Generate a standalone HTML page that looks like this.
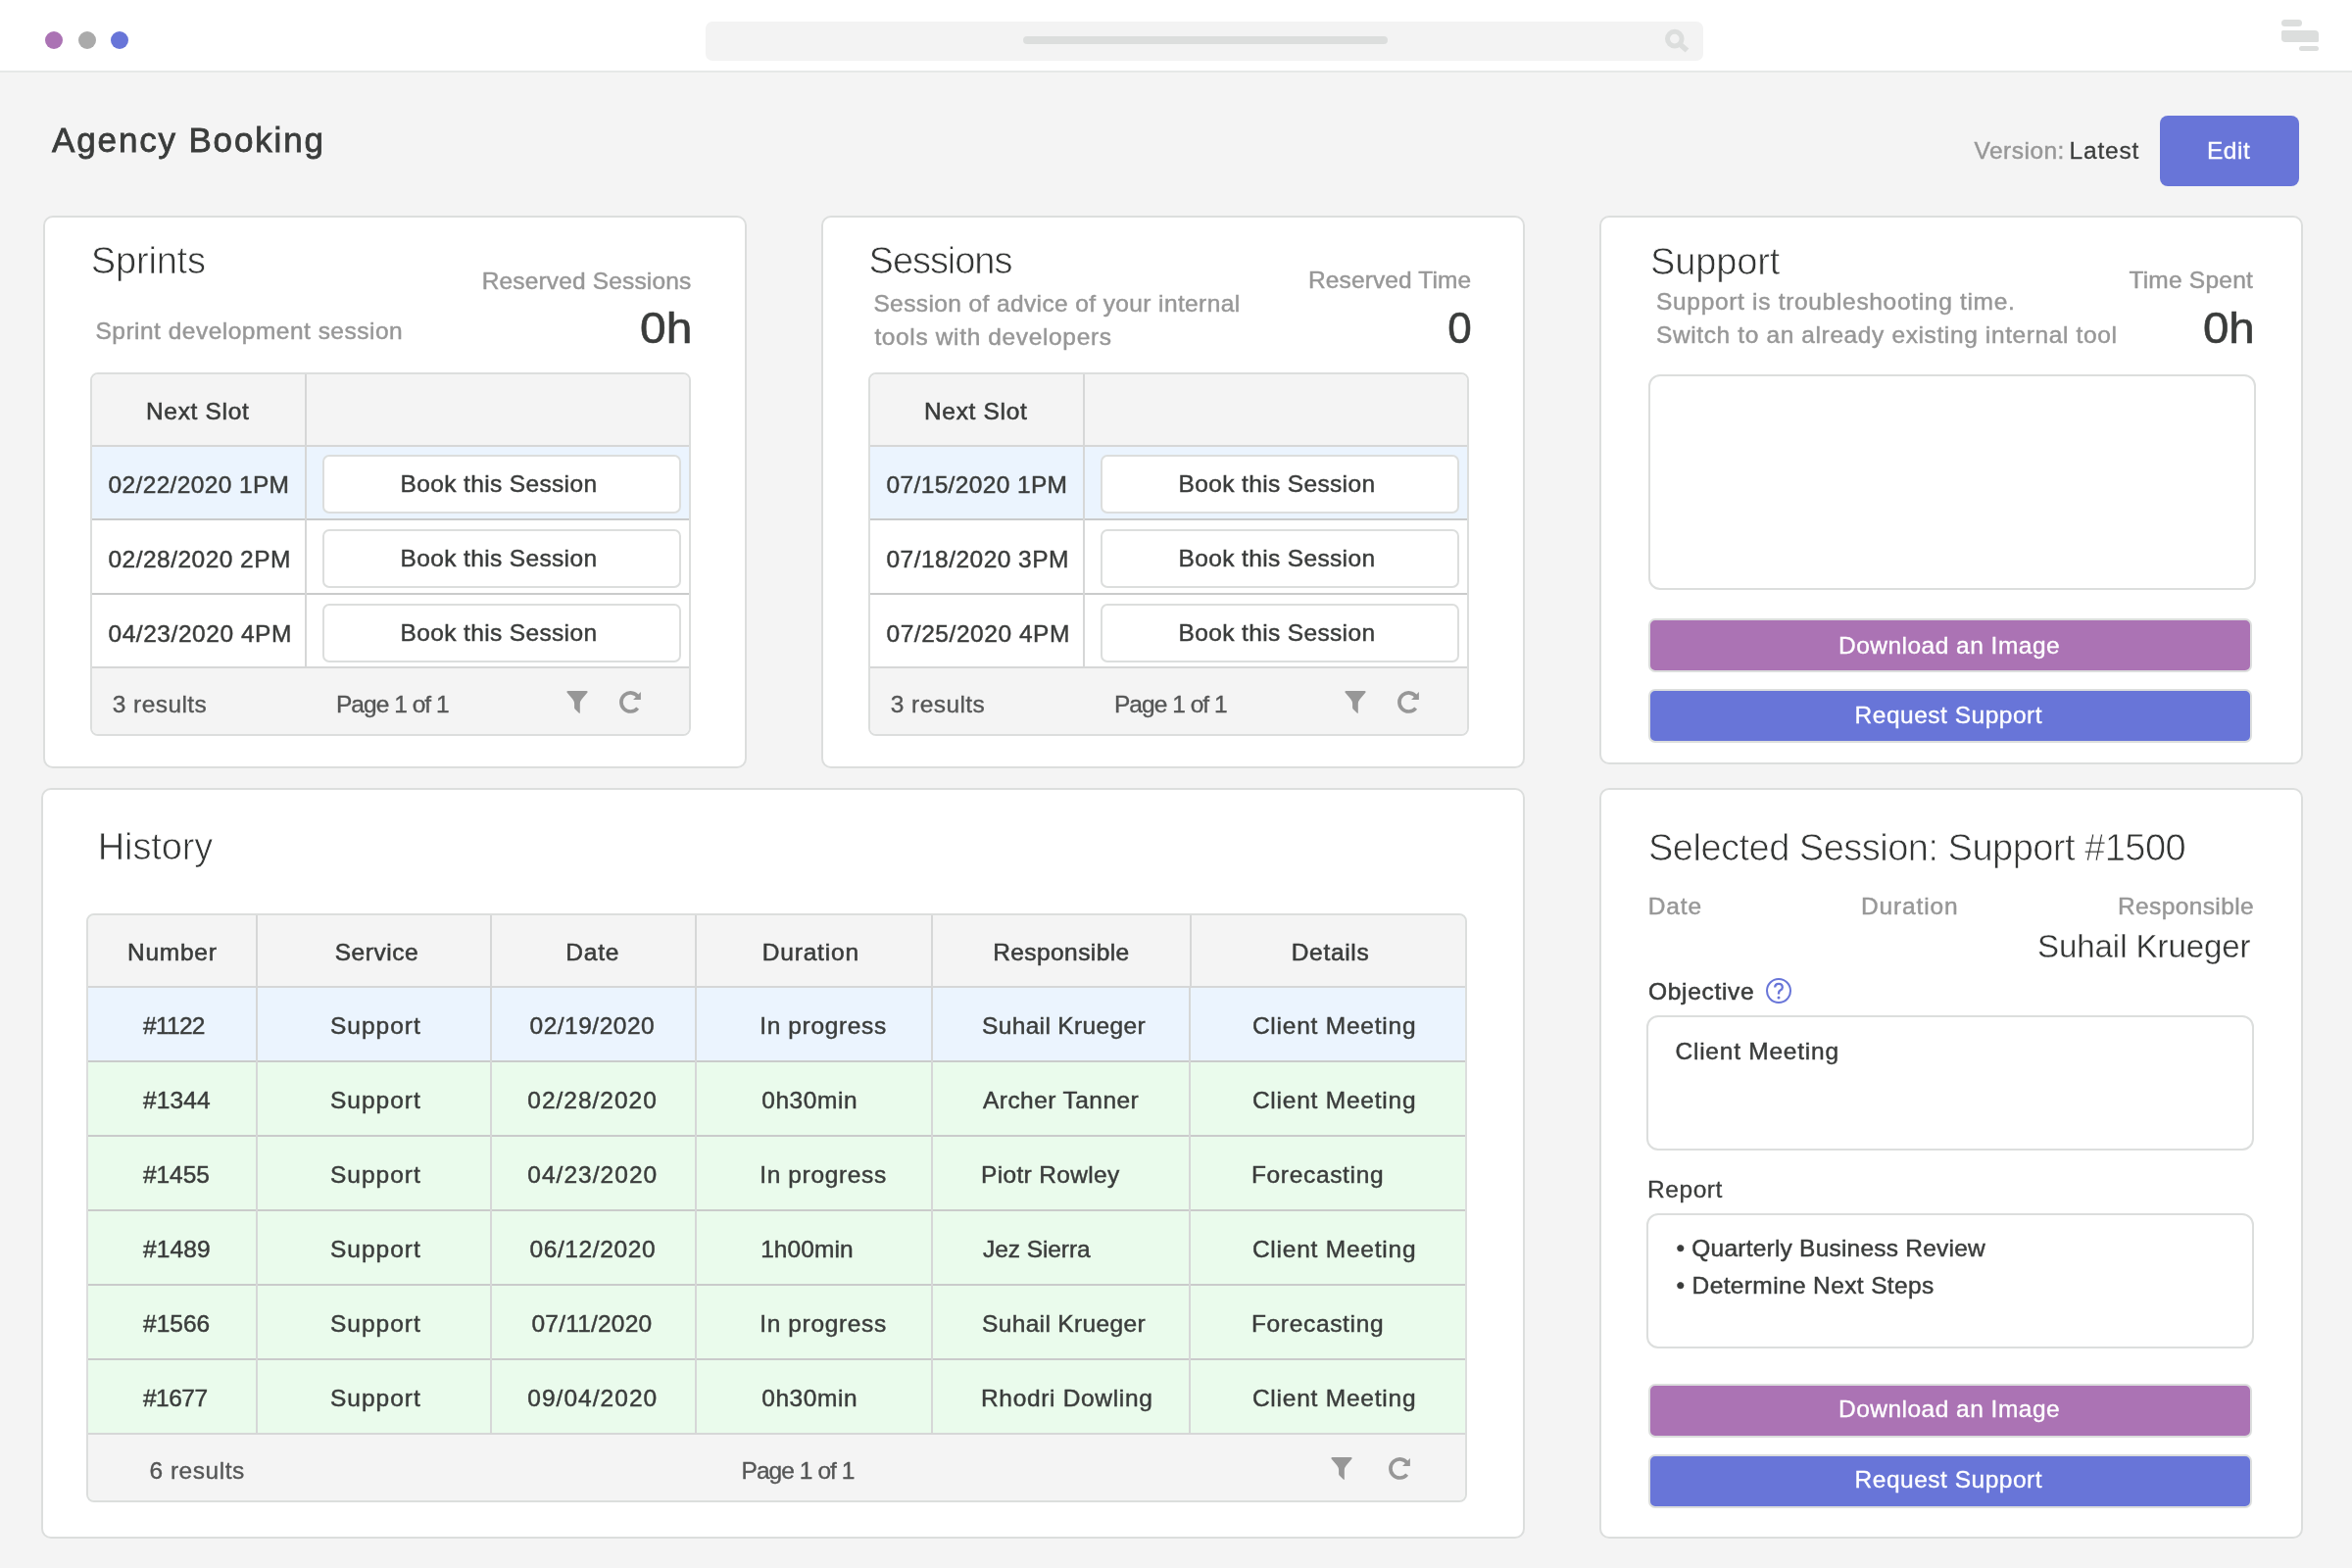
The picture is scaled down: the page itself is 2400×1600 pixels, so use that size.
<!DOCTYPE html>
<html><head><meta charset="utf-8"><style>
html,body{margin:0;padding:0;}
body{width:2400px;height:1600px;background:#f4f4f4;position:relative;overflow:hidden;font-family:"Liberation Sans",sans-serif;}
.a{position:absolute;box-sizing:border-box;}
.t{position:absolute;white-space:pre;line-height:1;font-family:"Liberation Sans",sans-serif;}
svg{position:absolute;overflow:visible;}
</style></head><body>
<div class="a" style="left:0px;top:0px;width:2400px;height:72px;background:#ffffff;"></div>
<div class="a" style="left:0px;top:72px;width:2400px;height:2px;background:#e6e8e7;"></div>
<div class="a" style="left:46px;top:32px;width:18px;height:18px;background:#ab73b4;border-radius:9px;"></div>
<div class="a" style="left:80px;top:32px;width:18px;height:18px;background:#aaaaaa;border-radius:9px;"></div>
<div class="a" style="left:113px;top:32px;width:18px;height:18px;background:#6875d8;border-radius:9px;"></div>
<div class="a" style="left:720px;top:22px;width:1018px;height:40px;background:#f3f3f3;border-radius:7px;"></div>
<div class="a" style="left:1044px;top:37px;width:372px;height:8px;background:#dcdedd;border-radius:4px;"></div>
<div class="a" style="left:2328px;top:20px;width:21px;height:7px;background:#dcdedd;border-radius:3.5px;"></div>
<div class="a" style="left:2328px;top:31px;width:38px;height:11.5px;background:#dcdedd;border-radius:1.5px 4px 1.5px 4px;"></div>
<div class="a" style="left:2346px;top:47px;width:20px;height:5px;background:#dcdedd;border-radius:2.5px;"></div>
<div class="a" style="left:2204px;top:118px;width:142px;height:72px;background:#6875d8;border-radius:8px;"></div>
<div class="a" style="left:44px;top:220px;width:718px;height:564px;background:#ffffff;border:2px solid #dcdedd;border-radius:10px;"></div>
<div class="a" style="left:838px;top:220px;width:718px;height:564px;background:#ffffff;border:2px solid #dcdedd;border-radius:10px;"></div>
<div class="a" style="left:1632px;top:220px;width:718px;height:560px;background:#ffffff;border:2px solid #dcdedd;border-radius:10px;"></div>
<div class="a" style="left:42px;top:804px;width:1514px;height:766px;background:#ffffff;border:2px solid #dcdedd;border-radius:10px;"></div>
<div class="a" style="left:1632px;top:804px;width:718px;height:766px;background:#ffffff;border:2px solid #dcdedd;border-radius:10px;"></div>
<div class="a" style="left:92px;top:380px;width:613px;height:371px;background:#ffffff;border:2px solid #dcdedd;border-radius:8px;overflow:hidden;"></div>
<div class="a" style="left:94px;top:382px;width:609px;height:72px;background:#f4f4f4;border-radius:6px 6px 0 0;"></div>
<div class="a" style="left:94px;top:454px;width:609px;height:2px;background:#d6d7d7;"></div>
<div class="a" style="left:94px;top:456px;width:609px;height:73px;background:#ebf4fe;"></div>
<div class="a" style="left:94px;top:529px;width:609px;height:2px;background:#cacbcb;"></div>
<div class="a" style="left:94px;top:605px;width:609px;height:2px;background:#cacbcb;"></div>
<div class="a" style="left:94px;top:680px;width:609px;height:2px;background:#d6d7d7;"></div>
<div class="a" style="left:94px;top:682px;width:609px;height:67px;background:#f4f4f4;border-radius:0 0 6px 6px;"></div>
<div class="a" style="left:311px;top:382px;width:2px;height:298px;background:#d6d7d7;"></div>
<div class="a" style="left:329px;top:464px;width:366px;height:60px;background:#ffffff;border:2px solid #dcdedd;border-radius:7px;"></div>
<div class="a" style="left:329px;top:540px;width:366px;height:60px;background:#ffffff;border:2px solid #dcdedd;border-radius:7px;"></div>
<div class="a" style="left:329px;top:616px;width:366px;height:60px;background:#ffffff;border:2px solid #dcdedd;border-radius:7px;"></div>
<div class="a" style="left:886px;top:380px;width:613px;height:371px;background:#ffffff;border:2px solid #dcdedd;border-radius:8px;overflow:hidden;"></div>
<div class="a" style="left:888px;top:382px;width:609px;height:72px;background:#f4f4f4;border-radius:6px 6px 0 0;"></div>
<div class="a" style="left:888px;top:454px;width:609px;height:2px;background:#d6d7d7;"></div>
<div class="a" style="left:888px;top:456px;width:609px;height:73px;background:#ebf4fe;"></div>
<div class="a" style="left:888px;top:529px;width:609px;height:2px;background:#cacbcb;"></div>
<div class="a" style="left:888px;top:605px;width:609px;height:2px;background:#cacbcb;"></div>
<div class="a" style="left:888px;top:680px;width:609px;height:2px;background:#d6d7d7;"></div>
<div class="a" style="left:888px;top:682px;width:609px;height:67px;background:#f4f4f4;border-radius:0 0 6px 6px;"></div>
<div class="a" style="left:1105px;top:382px;width:2px;height:298px;background:#d6d7d7;"></div>
<div class="a" style="left:1123px;top:464px;width:366px;height:60px;background:#ffffff;border:2px solid #dcdedd;border-radius:7px;"></div>
<div class="a" style="left:1123px;top:540px;width:366px;height:60px;background:#ffffff;border:2px solid #dcdedd;border-radius:7px;"></div>
<div class="a" style="left:1123px;top:616px;width:366px;height:60px;background:#ffffff;border:2px solid #dcdedd;border-radius:7px;"></div>
<div class="a" style="left:1682px;top:382px;width:620px;height:220px;background:#ffffff;border:2px solid #dcdedd;border-radius:12px;"></div>
<div class="a" style="left:1682px;top:631px;width:616px;height:55px;background:#ab73b4;border:2px solid #dcdedd;border-radius:7px;"></div>
<div class="a" style="left:1682px;top:703px;width:616px;height:55px;background:#6875d8;border:2px solid #dcdedd;border-radius:7px;"></div>
<div class="a" style="left:88px;top:932px;width:1409px;height:601px;background:#eafbec;border:2px solid #dcdedd;border-radius:8px;"></div>
<div class="a" style="left:90px;top:934px;width:1405px;height:72px;background:#f4f4f4;border-radius:6px 6px 0 0;"></div>
<div class="a" style="left:90px;top:1006px;width:1405px;height:2px;background:#d6d7d7;"></div>
<div class="a" style="left:90px;top:1008px;width:1405px;height:74px;background:#ebf4fe;"></div>
<div class="a" style="left:90px;top:1082px;width:1405px;height:2px;background:#cacbcb;"></div>
<div class="a" style="left:90px;top:1158px;width:1405px;height:2px;background:#cacbcb;"></div>
<div class="a" style="left:90px;top:1234px;width:1405px;height:2px;background:#cacbcb;"></div>
<div class="a" style="left:90px;top:1310px;width:1405px;height:2px;background:#cacbcb;"></div>
<div class="a" style="left:90px;top:1386px;width:1405px;height:2px;background:#cacbcb;"></div>
<div class="a" style="left:90px;top:1462px;width:1405px;height:2px;background:#d6d7d7;"></div>
<div class="a" style="left:90px;top:1464px;width:1405px;height:67px;background:#f4f4f4;border-radius:0 0 6px 6px;"></div>
<div class="a" style="left:261px;top:934px;width:2px;height:528px;background:#d6d7d7;"></div>
<div class="a" style="left:500px;top:934px;width:2px;height:528px;background:#d6d7d7;"></div>
<div class="a" style="left:709px;top:934px;width:2px;height:528px;background:#d6d7d7;"></div>
<div class="a" style="left:950px;top:934px;width:2px;height:74px;background:#d6d7d7;"></div>
<div class="a" style="left:949.5px;top:1008px;width:2.0px;height:454px;background:#d6d7d7;"></div>
<div class="a" style="left:1214px;top:934px;width:2px;height:74px;background:#d6d7d7;"></div>
<div class="a" style="left:1212.5px;top:1008px;width:2.0px;height:454px;background:#d6d7d7;"></div>
<div class="a" style="left:1680px;top:1036px;width:620px;height:138px;background:#ffffff;border:2px solid #dcdedd;border-radius:12px;"></div>
<div class="a" style="left:1680px;top:1238px;width:620px;height:138px;background:#ffffff;border:2px solid #dcdedd;border-radius:12px;"></div>
<div class="a" style="left:1682px;top:1412px;width:616px;height:55px;background:#ab73b4;border:2px solid #dcdedd;border-radius:7px;"></div>
<div class="a" style="left:1682px;top:1484px;width:616px;height:55px;background:#6875d8;border:2px solid #dcdedd;border-radius:7px;"></div>
<svg style="left:1696px;top:28px" width="30" height="30" viewBox="0 0 30 30"><circle cx="12.8" cy="11.6" r="7.3" fill="none" stroke="#dcdedd" stroke-width="5"/><line x1="18" y1="17" x2="25.5" y2="23.5" stroke="#dcdedd" stroke-width="5.5"/></svg>
<svg style="left:578px;top:705px" width="24" height="23" viewBox="0 0 24 23"><path d="M0.5,1.6 Q-0.2,0 1.5,0 L20.5,0 Q22.2,0 21.5,1.6 L15.6,8.4 Q13.8,10.6 13.8,13 L13.8,22 Q13.8,23.4 12.7,22.6 L8.6,18.4 Q8.1,17.9 8.1,17 L8.1,13 Q8.1,10.6 6.4,8.4 Z" fill="#979797"/></svg>
<svg style="left:631px;top:705px" width="24" height="23" viewBox="0 0 24 23"><path d="M19.68,17.6 A9.5,9.5 0 1 1 20.2,6.05" fill="none" stroke="#979797" stroke-width="3.7"/><path d="M22.9,1.0 L22.9,9.1 L15.1,9.1 Z" fill="#979797"/></svg>
<svg style="left:1372px;top:705px" width="24" height="23" viewBox="0 0 24 23"><path d="M0.5,1.6 Q-0.2,0 1.5,0 L20.5,0 Q22.2,0 21.5,1.6 L15.6,8.4 Q13.8,10.6 13.8,13 L13.8,22 Q13.8,23.4 12.7,22.6 L8.6,18.4 Q8.1,17.9 8.1,17 L8.1,13 Q8.1,10.6 6.4,8.4 Z" fill="#979797"/></svg>
<svg style="left:1425px;top:705px" width="24" height="23" viewBox="0 0 24 23"><path d="M19.68,17.6 A9.5,9.5 0 1 1 20.2,6.05" fill="none" stroke="#979797" stroke-width="3.7"/><path d="M22.9,1.0 L22.9,9.1 L15.1,9.1 Z" fill="#979797"/></svg>
<svg style="left:1358px;top:1487px" width="24" height="23" viewBox="0 0 24 23"><path d="M0.5,1.6 Q-0.2,0 1.5,0 L20.5,0 Q22.2,0 21.5,1.6 L15.6,8.4 Q13.8,10.6 13.8,13 L13.8,22 Q13.8,23.4 12.7,22.6 L8.6,18.4 Q8.1,17.9 8.1,17 L8.1,13 Q8.1,10.6 6.4,8.4 Z" fill="#979797"/></svg>
<svg style="left:1416.3px;top:1487px" width="24" height="23" viewBox="0 0 24 23"><path d="M19.68,17.6 A9.5,9.5 0 1 1 20.2,6.05" fill="none" stroke="#979797" stroke-width="3.7"/><path d="M22.9,1.0 L22.9,9.1 L15.1,9.1 Z" fill="#979797"/></svg>
<svg style="left:1801px;top:997px" width="28" height="28" viewBox="0 0 28 28"><circle cx="14" cy="14" r="12" fill="none" stroke="#6875d8" stroke-width="2"/><path d="M10.2,10.6 Q10.2,6.8 14,6.8 Q17.8,6.8 17.8,10.4 Q17.8,12.4 15.6,13.6 Q14,14.5 14,16.4 L14,17.4" fill="none" stroke="#6875d8" stroke-width="2.3"/><circle cx="14" cy="21" r="1.5" fill="#6875d8"/></svg>
<div style="position:absolute;left:0;top:0;width:2400px;height:1600px;will-change:transform">
<div class="t" style="left:53.10px;top:125.00px;font-size:35px;color:#3a3c3b;letter-spacing:1.840px;-webkit-text-stroke:0.8px #3a3c3b;">Agency Booking</div>
<div class="t" style="left:2014.50px;top:142.00px;font-size:24.5px;color:#979797;letter-spacing:0.483px;-webkit-text-stroke:0.45px #979797;">Version:</div>
<div class="t" style="left:2111.60px;top:142.00px;font-size:24.5px;color:#3a3c3b;letter-spacing:0.793px;-webkit-text-stroke:0.3px #3a3c3b;">Latest</div>
<div class="t" style="left:2252.00px;top:142.00px;font-size:24.5px;color:#ffffff;letter-spacing:0.530px;-webkit-text-stroke:0.3px #ffffff;">Edit</div>
<div class="t" style="left:92.80px;top:247.00px;font-size:38px;color:#333534;letter-spacing:-0.178px;-webkit-text-stroke:0.75px #ffffff;">Sprints</div>
<div class="t" style="left:491.70px;top:275.00px;font-size:24.5px;color:#979797;letter-spacing:0.155px;-webkit-text-stroke:0.45px #979797;">Reserved Sessions</div>
<div class="t" style="left:652.91px;top:313.00px;font-size:44px;color:#3a3c3b;transform:scaleX(1.0886);transform-origin:0 0;-webkit-text-stroke:0.6px #3a3c3b;">0h</div>
<div class="t" style="left:97.50px;top:326.00px;font-size:24.5px;color:#979797;letter-spacing:0.486px;-webkit-text-stroke:0.45px #979797;">Sprint development session</div>
<div class="t" style="left:149.00px;top:408.00px;font-size:24.5px;color:#3a3c3b;letter-spacing:0.676px;-webkit-text-stroke:0.55px #3a3c3b;">Next Slot</div>
<div class="t" style="left:110.50px;top:483.00px;font-size:24.5px;color:#3a3c3b;letter-spacing:0.362px;-webkit-text-stroke:0.45px #3a3c3b;">02/22/2020 1PM</div>
<div class="t" style="left:408.60px;top:482.00px;font-size:24.5px;color:#3a3c3b;letter-spacing:0.355px;-webkit-text-stroke:0.45px #3a3c3b;">Book this Session</div>
<div class="t" style="left:110.50px;top:559.00px;font-size:24.5px;color:#3a3c3b;letter-spacing:0.470px;-webkit-text-stroke:0.45px #3a3c3b;">02/28/2020 2PM</div>
<div class="t" style="left:408.60px;top:558.00px;font-size:24.5px;color:#3a3c3b;letter-spacing:0.355px;-webkit-text-stroke:0.45px #3a3c3b;">Book this Session</div>
<div class="t" style="left:110.50px;top:635.00px;font-size:24.5px;color:#3a3c3b;letter-spacing:0.547px;-webkit-text-stroke:0.45px #3a3c3b;">04/23/2020 4PM</div>
<div class="t" style="left:408.60px;top:634.00px;font-size:24.5px;color:#3a3c3b;letter-spacing:0.355px;-webkit-text-stroke:0.45px #3a3c3b;">Book this Session</div>
<div class="t" style="left:114.80px;top:707.00px;font-size:24.5px;color:#555656;letter-spacing:0.432px;-webkit-text-stroke:0.35px #555656;">3 results</div>
<div class="t" style="left:343.00px;top:707.00px;font-size:24.5px;color:#555656;letter-spacing:-0.970px;-webkit-text-stroke:0.35px #555656;">Page 1 of 1</div>
<div class="t" style="left:886.60px;top:247.00px;font-size:38px;color:#333534;letter-spacing:-1.056px;-webkit-text-stroke:0.75px #ffffff;">Sessions</div>
<div class="t" style="left:891.40px;top:298.00px;font-size:24.5px;color:#979797;letter-spacing:0.389px;-webkit-text-stroke:0.45px #979797;">Session of advice of your internal</div>
<div class="t" style="left:892.40px;top:332.00px;font-size:24.5px;color:#979797;letter-spacing:0.638px;-webkit-text-stroke:0.45px #979797;">tools with developers</div>
<div class="t" style="left:1335.00px;top:274.00px;font-size:24.5px;color:#979797;letter-spacing:0.119px;-webkit-text-stroke:0.45px #979797;">Reserved Time</div>
<div class="t" style="left:1477.20px;top:313.00px;font-size:44px;color:#3a3c3b;-webkit-text-stroke:0.6px #3a3c3b;">0</div>
<div class="t" style="left:943.00px;top:408.00px;font-size:24.5px;color:#3a3c3b;letter-spacing:0.676px;-webkit-text-stroke:0.55px #3a3c3b;">Next Slot</div>
<div class="t" style="left:904.50px;top:483.00px;font-size:24.5px;color:#3a3c3b;letter-spacing:0.362px;-webkit-text-stroke:0.45px #3a3c3b;">07/15/2020 1PM</div>
<div class="t" style="left:1202.60px;top:482.00px;font-size:24.5px;color:#3a3c3b;letter-spacing:0.355px;-webkit-text-stroke:0.45px #3a3c3b;">Book this Session</div>
<div class="t" style="left:904.50px;top:559.00px;font-size:24.5px;color:#3a3c3b;letter-spacing:0.470px;-webkit-text-stroke:0.45px #3a3c3b;">07/18/2020 3PM</div>
<div class="t" style="left:1202.60px;top:558.00px;font-size:24.5px;color:#3a3c3b;letter-spacing:0.355px;-webkit-text-stroke:0.45px #3a3c3b;">Book this Session</div>
<div class="t" style="left:904.50px;top:635.00px;font-size:24.5px;color:#3a3c3b;letter-spacing:0.547px;-webkit-text-stroke:0.45px #3a3c3b;">07/25/2020 4PM</div>
<div class="t" style="left:1202.60px;top:634.00px;font-size:24.5px;color:#3a3c3b;letter-spacing:0.355px;-webkit-text-stroke:0.45px #3a3c3b;">Book this Session</div>
<div class="t" style="left:908.80px;top:707.00px;font-size:24.5px;color:#555656;letter-spacing:0.432px;-webkit-text-stroke:0.35px #555656;">3 results</div>
<div class="t" style="left:1137.00px;top:707.00px;font-size:24.5px;color:#555656;letter-spacing:-0.970px;-webkit-text-stroke:0.35px #555656;">Page 1 of 1</div>
<div class="t" style="left:1684.00px;top:248.00px;font-size:38px;color:#333534;letter-spacing:-0.139px;-webkit-text-stroke:0.75px #ffffff;">Support</div>
<div class="t" style="left:1690.00px;top:296.00px;font-size:24.5px;color:#979797;letter-spacing:0.686px;-webkit-text-stroke:0.45px #979797;">Support is troubleshooting time.</div>
<div class="t" style="left:1690.00px;top:330.00px;font-size:24.5px;color:#979797;letter-spacing:0.618px;-webkit-text-stroke:0.45px #979797;">Switch to an already existing internal tool</div>
<div class="t" style="left:2172.40px;top:274.00px;font-size:24.5px;color:#979797;letter-spacing:0.227px;-webkit-text-stroke:0.45px #979797;">Time Spent</div>
<div class="t" style="left:2247.92px;top:313.00px;font-size:44px;color:#3a3c3b;transform:scaleX(1.0776);transform-origin:0 0;-webkit-text-stroke:0.6px #3a3c3b;">0h</div>
<div class="t" style="left:1876.00px;top:647.00px;font-size:24.5px;color:#ffffff;letter-spacing:0.482px;-webkit-text-stroke:0.35px #ffffff;">Download an Image</div>
<div class="t" style="left:1892.60px;top:718.00px;font-size:24.5px;color:#ffffff;letter-spacing:0.503px;-webkit-text-stroke:0.35px #ffffff;">Request Support</div>
<div class="t" style="left:99.80px;top:845.00px;font-size:38px;color:#333534;letter-spacing:-0.122px;-webkit-text-stroke:0.75px #ffffff;">History</div>
<div class="t" style="left:130.00px;top:960.00px;font-size:24.5px;color:#3a3c3b;letter-spacing:0.744px;-webkit-text-stroke:0.55px #3a3c3b;">Number</div>
<div class="t" style="left:341.70px;top:960.00px;font-size:24.5px;color:#3a3c3b;letter-spacing:0.539px;-webkit-text-stroke:0.55px #3a3c3b;">Service</div>
<div class="t" style="left:577.30px;top:960.00px;font-size:24.5px;color:#3a3c3b;letter-spacing:0.791px;-webkit-text-stroke:0.55px #3a3c3b;">Date</div>
<div class="t" style="left:777.70px;top:960.00px;font-size:24.5px;color:#3a3c3b;letter-spacing:0.832px;-webkit-text-stroke:0.55px #3a3c3b;">Duration</div>
<div class="t" style="left:1013.20px;top:960.00px;font-size:24.5px;color:#3a3c3b;letter-spacing:0.419px;-webkit-text-stroke:0.55px #3a3c3b;">Responsible</div>
<div class="t" style="left:1317.70px;top:960.00px;font-size:24.5px;color:#3a3c3b;letter-spacing:0.694px;-webkit-text-stroke:0.55px #3a3c3b;">Details</div>
<div class="t" style="left:146.00px;top:1035.00px;font-size:24.5px;color:#3a3c3b;letter-spacing:-0.721px;-webkit-text-stroke:0.45px #3a3c3b;">#1122</div>
<div class="t" style="left:337.00px;top:1035.00px;font-size:24.5px;color:#3a3c3b;letter-spacing:1.000px;-webkit-text-stroke:0.45px #3a3c3b;">Support</div>
<div class="t" style="left:540.60px;top:1035.00px;font-size:24.5px;color:#3a3c3b;letter-spacing:0.490px;-webkit-text-stroke:0.45px #3a3c3b;">02/19/2020</div>
<div class="t" style="left:775.20px;top:1035.00px;font-size:24.5px;color:#3a3c3b;letter-spacing:0.639px;-webkit-text-stroke:0.45px #3a3c3b;">In progress</div>
<div class="t" style="left:1002.00px;top:1035.00px;font-size:24.5px;color:#3a3c3b;letter-spacing:0.345px;-webkit-text-stroke:0.45px #3a3c3b;">Suhail Krueger</div>
<div class="t" style="left:1277.90px;top:1035.00px;font-size:24.5px;color:#3a3c3b;letter-spacing:0.771px;-webkit-text-stroke:0.45px #3a3c3b;">Client Meeting</div>
<div class="t" style="left:146.00px;top:1111.00px;font-size:24.5px;color:#3a3c3b;letter-spacing:0.124px;-webkit-text-stroke:0.45px #3a3c3b;">#1344</div>
<div class="t" style="left:337.00px;top:1111.00px;font-size:24.5px;color:#3a3c3b;letter-spacing:1.000px;-webkit-text-stroke:0.45px #3a3c3b;">Support</div>
<div class="t" style="left:538.30px;top:1111.00px;font-size:24.5px;color:#3a3c3b;letter-spacing:0.990px;-webkit-text-stroke:0.45px #3a3c3b;">02/28/2020</div>
<div class="t" style="left:777.20px;top:1111.00px;font-size:24.5px;color:#3a3c3b;letter-spacing:0.591px;-webkit-text-stroke:0.45px #3a3c3b;">0h30min</div>
<div class="t" style="left:1003.00px;top:1111.00px;font-size:24.5px;color:#3a3c3b;letter-spacing:0.440px;-webkit-text-stroke:0.45px #3a3c3b;">Archer Tanner</div>
<div class="t" style="left:1277.90px;top:1111.00px;font-size:24.5px;color:#3a3c3b;letter-spacing:0.771px;-webkit-text-stroke:0.45px #3a3c3b;">Client Meeting</div>
<div class="t" style="left:146.00px;top:1187.00px;font-size:24.5px;color:#3a3c3b;letter-spacing:-0.076px;-webkit-text-stroke:0.45px #3a3c3b;">#1455</div>
<div class="t" style="left:337.00px;top:1187.00px;font-size:24.5px;color:#3a3c3b;letter-spacing:1.000px;-webkit-text-stroke:0.45px #3a3c3b;">Support</div>
<div class="t" style="left:538.30px;top:1187.00px;font-size:24.5px;color:#3a3c3b;letter-spacing:1.034px;-webkit-text-stroke:0.45px #3a3c3b;">04/23/2020</div>
<div class="t" style="left:775.20px;top:1187.00px;font-size:24.5px;color:#3a3c3b;letter-spacing:0.639px;-webkit-text-stroke:0.45px #3a3c3b;">In progress</div>
<div class="t" style="left:1001.00px;top:1187.00px;font-size:24.5px;color:#3a3c3b;letter-spacing:0.331px;-webkit-text-stroke:0.45px #3a3c3b;">Piotr Rowley</div>
<div class="t" style="left:1276.90px;top:1187.00px;font-size:24.5px;color:#3a3c3b;letter-spacing:0.672px;-webkit-text-stroke:0.45px #3a3c3b;">Forecasting</div>
<div class="t" style="left:146.00px;top:1263.00px;font-size:24.5px;color:#3a3c3b;letter-spacing:0.124px;-webkit-text-stroke:0.45px #3a3c3b;">#1489</div>
<div class="t" style="left:337.00px;top:1263.00px;font-size:24.5px;color:#3a3c3b;letter-spacing:1.000px;-webkit-text-stroke:0.45px #3a3c3b;">Support</div>
<div class="t" style="left:540.40px;top:1263.00px;font-size:24.5px;color:#3a3c3b;letter-spacing:0.623px;-webkit-text-stroke:0.45px #3a3c3b;">06/12/2020</div>
<div class="t" style="left:776.20px;top:1263.00px;font-size:24.5px;color:#3a3c3b;letter-spacing:0.058px;-webkit-text-stroke:0.45px #3a3c3b;">1h00min</div>
<div class="t" style="left:1003.00px;top:1263.00px;font-size:24.5px;color:#3a3c3b;letter-spacing:-0.073px;-webkit-text-stroke:0.45px #3a3c3b;">Jez Sierra</div>
<div class="t" style="left:1277.90px;top:1263.00px;font-size:24.5px;color:#3a3c3b;letter-spacing:0.771px;-webkit-text-stroke:0.45px #3a3c3b;">Client Meeting</div>
<div class="t" style="left:146.00px;top:1339.00px;font-size:24.5px;color:#3a3c3b;-webkit-text-stroke:0.45px #3a3c3b;">#1566</div>
<div class="t" style="left:337.00px;top:1339.00px;font-size:24.5px;color:#3a3c3b;letter-spacing:1.000px;-webkit-text-stroke:0.45px #3a3c3b;">Support</div>
<div class="t" style="left:542.50px;top:1339.00px;font-size:24.5px;color:#3a3c3b;letter-spacing:0.203px;-webkit-text-stroke:0.45px #3a3c3b;">07/11/2020</div>
<div class="t" style="left:775.20px;top:1339.00px;font-size:24.5px;color:#3a3c3b;letter-spacing:0.639px;-webkit-text-stroke:0.45px #3a3c3b;">In progress</div>
<div class="t" style="left:1002.00px;top:1339.00px;font-size:24.5px;color:#3a3c3b;letter-spacing:0.345px;-webkit-text-stroke:0.45px #3a3c3b;">Suhail Krueger</div>
<div class="t" style="left:1276.90px;top:1339.00px;font-size:24.5px;color:#3a3c3b;letter-spacing:0.672px;-webkit-text-stroke:0.45px #3a3c3b;">Forecasting</div>
<div class="t" style="left:146.00px;top:1415.00px;font-size:24.5px;color:#3a3c3b;letter-spacing:-0.501px;-webkit-text-stroke:0.45px #3a3c3b;">#1677</div>
<div class="t" style="left:337.00px;top:1415.00px;font-size:24.5px;color:#3a3c3b;letter-spacing:1.000px;-webkit-text-stroke:0.45px #3a3c3b;">Support</div>
<div class="t" style="left:538.30px;top:1415.00px;font-size:24.5px;color:#3a3c3b;letter-spacing:1.034px;-webkit-text-stroke:0.45px #3a3c3b;">09/04/2020</div>
<div class="t" style="left:777.20px;top:1415.00px;font-size:24.5px;color:#3a3c3b;letter-spacing:0.591px;-webkit-text-stroke:0.45px #3a3c3b;">0h30min</div>
<div class="t" style="left:1001.00px;top:1415.00px;font-size:24.5px;color:#3a3c3b;letter-spacing:0.669px;-webkit-text-stroke:0.45px #3a3c3b;">Rhodri Dowling</div>
<div class="t" style="left:1277.90px;top:1415.00px;font-size:24.5px;color:#3a3c3b;letter-spacing:0.771px;-webkit-text-stroke:0.45px #3a3c3b;">Client Meeting</div>
<div class="t" style="left:152.40px;top:1489.00px;font-size:24.5px;color:#555656;letter-spacing:0.532px;-webkit-text-stroke:0.35px #555656;">6 results</div>
<div class="t" style="left:756.50px;top:1489.00px;font-size:24.5px;color:#555656;letter-spacing:-0.940px;-webkit-text-stroke:0.35px #555656;">Page 1 of 1</div>
<div class="t" style="left:1682.00px;top:846.00px;font-size:38px;color:#333534;letter-spacing:-0.511px;-webkit-text-stroke:0.75px #ffffff;">Selected Session: Support #1500</div>
<div class="t" style="left:1681.70px;top:913.00px;font-size:24.5px;color:#979797;letter-spacing:0.858px;-webkit-text-stroke:0.45px #979797;">Date</div>
<div class="t" style="left:1899.00px;top:913.00px;font-size:24.5px;color:#979797;letter-spacing:0.860px;-webkit-text-stroke:0.45px #979797;">Duration</div>
<div class="t" style="left:2161.00px;top:913.00px;font-size:24.5px;color:#979797;letter-spacing:0.379px;-webkit-text-stroke:0.45px #979797;">Responsible</div>
<div class="t" style="left:2079.00px;top:949.00px;font-size:33px;color:#333534;letter-spacing:-0.055px;-webkit-text-stroke:0.35px #ffffff;">Suhail Krueger</div>
<div class="t" style="left:1682.00px;top:1000.00px;font-size:24.5px;color:#3a3c3b;letter-spacing:0.687px;-webkit-text-stroke:0.55px #3a3c3b;">Objective</div>
<div class="t" style="left:1709.50px;top:1061.00px;font-size:24.5px;color:#3a3c3b;letter-spacing:0.763px;-webkit-text-stroke:0.45px #3a3c3b;">Client Meeting</div>
<div class="t" style="left:1681.00px;top:1202.00px;font-size:24.5px;color:#3a3c3b;letter-spacing:0.574px;-webkit-text-stroke:0.3px #3a3c3b;">Report</div>
<div class="t" style="left:1710.50px;top:1262.00px;font-size:24.5px;color:#3a3c3b;letter-spacing:0.219px;-webkit-text-stroke:0.45px #3a3c3b;">• Quarterly Business Review</div>
<div class="t" style="left:1710.50px;top:1300.00px;font-size:24.5px;color:#3a3c3b;letter-spacing:0.367px;-webkit-text-stroke:0.45px #3a3c3b;">• Determine Next Steps</div>
<div class="t" style="left:1876.00px;top:1426.00px;font-size:24.5px;color:#ffffff;letter-spacing:0.482px;-webkit-text-stroke:0.35px #ffffff;">Download an Image</div>
<div class="t" style="left:1892.60px;top:1498.00px;font-size:24.5px;color:#ffffff;letter-spacing:0.503px;-webkit-text-stroke:0.35px #ffffff;">Request Support</div>
</div>
</body></html>
